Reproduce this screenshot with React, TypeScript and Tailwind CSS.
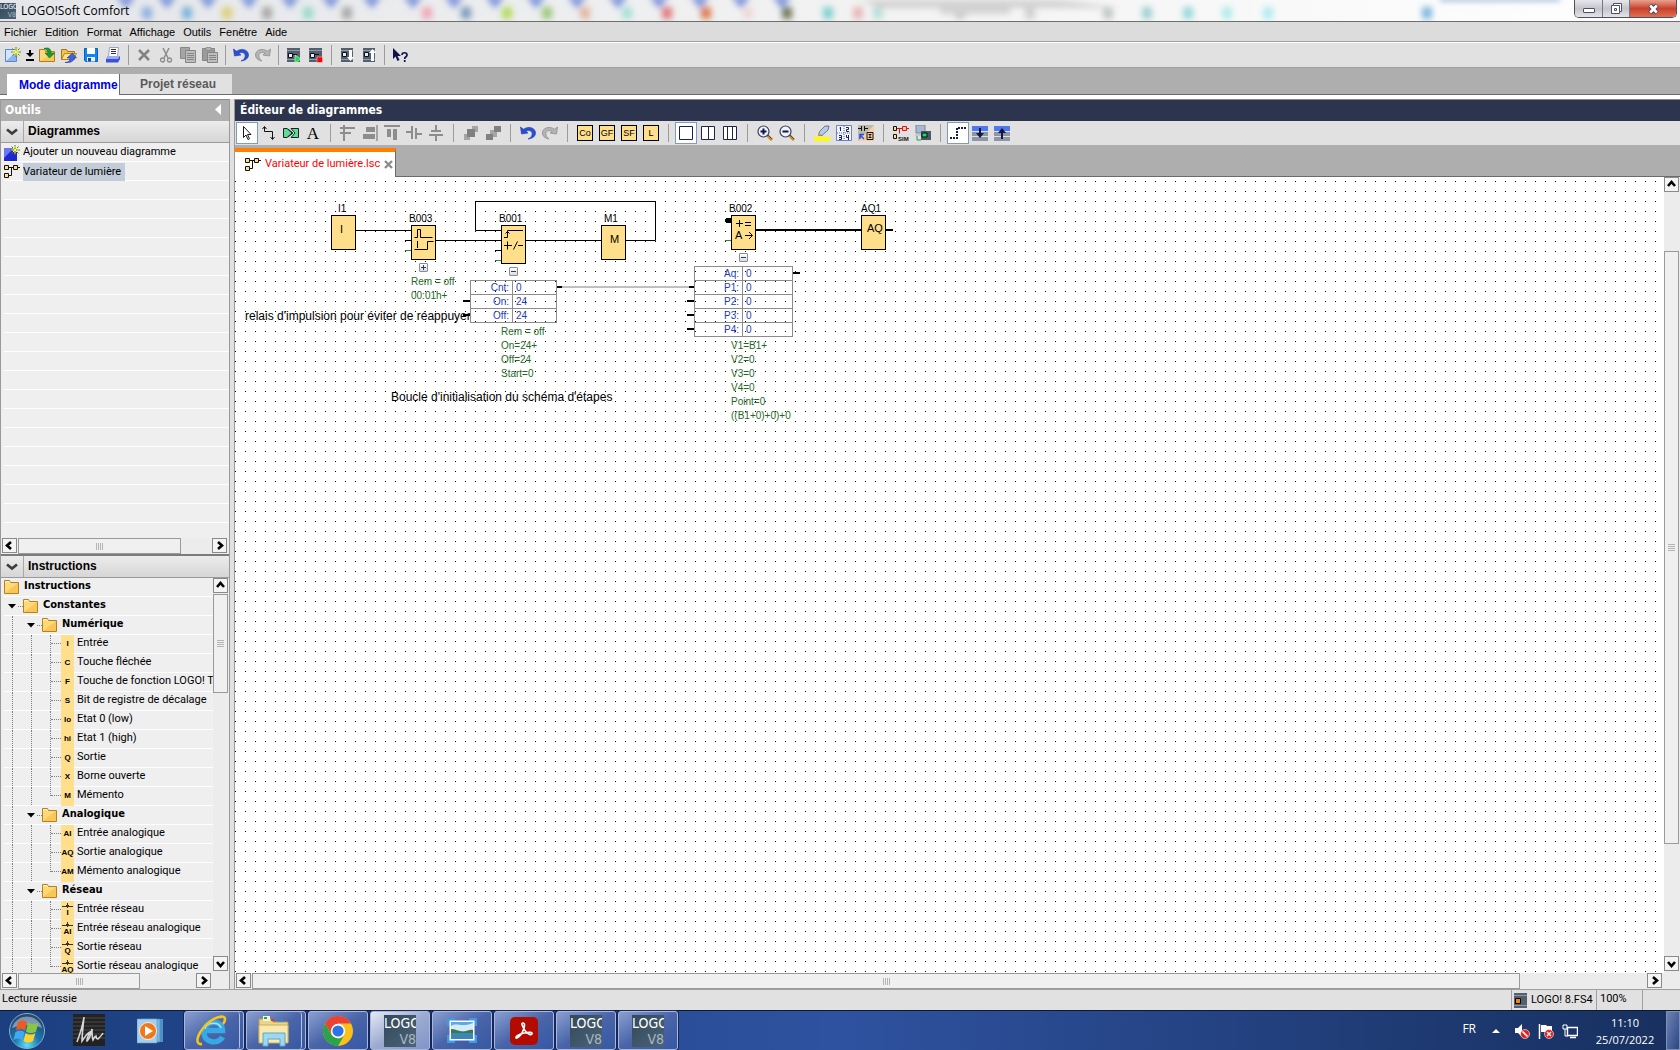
import type { ReactNode } from 'react'

type IconProps = { children: ReactNode; size?: number }

function Icon({ children, size = 16 }: IconProps) {
  return (
    <svg width={size} height={size} viewBox="0 0 16 16" fill="none" className="shrink-0" aria-hidden="true">
      {children}
    </svg>
  )
}

function Spark() {
  return (
    <>
      <path d="M11 0v10M6 5h10M7.500 1.500l7 7M14.500 1.500l-7 7" stroke="#5b7a2a" strokeWidth="1" />
      <path d="M11 1.500v7M7.500 5h7M9 3l4 4M13 3l-4 4" stroke="#ffff3c" strokeWidth="1" />
    </>
  )
}

const icons: Record<string, ReactNode> = {
  new: (
    <>
      <path d="M.5 2.500h11v12H.5z" fill="#d6e4fc" stroke="#5a86d0" />
      <path d="M1 14L11 5v9z" fill="#8fb4f2" />
      <Spark />
    </>
  ),
  open: (
    <>
      <path d="M.5 2.500h5l1 2h9v10H.5z" fill="#ffd878" stroke="#b0801c" />
      <path d="M1 14L15 6v8z" fill="#f7c95a" />
      <path d="M5 1.500c5-1.500 7 .5 7 4.500h3.500l-5 5-4.500-5H9c0-2-1-3.500-4-4.500z" fill="#1d9a2f" stroke="#0b6419" strokeWidth=".6" />
    </>
  ),
  import: (
    <>
      <path d="M.5 2.500h5l1 2h7v8H.5z" fill="#f5c24a" stroke="#a8761a" />
      <path d="M3.500 6.500h12l-3 6H.5z" fill="#ffdf85" stroke="#a8761a" strokeWidth=".8" />
      <path d="M4 15.500c4-.5 5-1.500 5-4.500H6l5.500-5 4 5H13c0 3-3 5-9 4.500z" fill="#3c62e8" stroke="#1b379c" strokeWidth=".6" />
    </>
  ),
  save: (
    <>
      <path d="M1.500 1.500h13v13h-12l-1-1z" fill="#1286f0" stroke="#0b5fc0" />
      <path d="M4 1h8v6H4z" fill="#fff" />
      <path d="M4 10h8v4.500H4z" fill="#e8f2ff" />
      <path d="M5 11h3v3.500H5z" fill="#0c4fa8" />
    </>
  ),
  print: (
    <>
      <path d="M4.500.5h9l-1 9h-9z" fill="#fff" stroke="#9aa2c8" />
      <path d="M6 2.500h5M6 4.500h5M6 6.500h5" stroke="#2a2a6a" />
      <path d="M3 9h12v3l-2 3.500H1V12z" fill="#3c50dc" />
      <path d="M3 9h12l-2 3H1z" fill="#9aa8f8" />
    </>
  ),
  delete: <path d="M3 3l10 10M13 3L3 13" stroke="#838383" strokeWidth="2.600" />,
  cut: (
    <>
      <path d="M5 1l5 10M11 1L6 11" stroke="#8c8c8c" strokeWidth="1.500" />
      <circle cx="4.500" cy="13" r="2" stroke="#8c8c8c" strokeWidth="1.300" />
      <circle cx="11.500" cy="13" r="2" stroke="#8c8c8c" strokeWidth="1.300" />
    </>
  ),
  copy: (
    <>
      <path d="M.5.5h9v11h-9z" fill="#a5a5a5" stroke="#888" />
      <path d="M5.500 3.500h10v12h-10z" fill="#bdbdbd" stroke="#858585" />
      <path d="M7 6.500h7M7 8.500h7M7 10.500h7M7 12.500h7" stroke="#858585" />
    </>
  ),
  paste: (
    <>
      <path d="M.5 1.500h12v12H.5z" fill="#9b9b9b" stroke="#868686" />
      <path d="M4 .5h5v3H4z" fill="#b4b4b4" stroke="#868686" strokeWidth=".8" />
      <path d="M5.500 5.500h10v10h-10z" fill="#bdbdbd" stroke="#858585" />
      <path d="M7 8.500h7M7 10.500h7M7 12.500h7" stroke="#858585" />
    </>
  ),
  undo: (
    <path d="M.5 2l1 7 6.500-1-2.200-1.700C9 4.500 13 6 12 10c-.5 2-2 3-4 4 5-.5 7.500-3 7.500-6C15.500 3 9 .5 3.500 4.200z" fill="#2a50cc" stroke="#1b3bb0" strokeWidth=".6" />
  ),
  redo: (
    <path d="M15.500 2l-1 7-6.500-1 2.200-1.700C7 4.500 3 6 4 10c.5 2 2 3 3 4-4-.5-6.500-3-6.500-6C.5 3 7 .5 12.500 4.200z" fill="#b4b4b4" stroke="#8e8e8e" strokeWidth=".8" />
  ),
  start: (
    <>
      <path d="M1 1h13v14H1z" fill="#55606f" />
      <path d="M1 3.500h13M1 12.500h13" stroke="#8e98a6" />
      <path d="M2.500 6.500h4v4h-4zM7 7.500h4" fill="#e8edf2" stroke="#0c1016" />
      <path d="M9 8l6 4-6 4z" fill="#1fe04a" stroke="#e8ffe8" strokeWidth=".6" />
    </>
  ),
  stop: (
    <>
      <path d="M1 1h13v14H1z" fill="#55606f" />
      <path d="M1 3.500h13M1 12.500h13" stroke="#8e98a6" />
      <path d="M2.500 6.500h4v4h-4zM7 7.500h4" fill="#e8edf2" stroke="#0c1016" />
      <path d="M9 10h5.500v5.500H9z" fill="#f00" stroke="#ffd6d6" strokeWidth=".5" />
    </>
  ),
  download: (
    <>
      <path d="M2 1h12v14H2z" fill="#55606f" />
      <path d="M2 3.500h12M2 12.500h12" stroke="#8e98a6" />
      <path d="M3.500 5.500h4v4h-4z" fill="#e8edf2" stroke="#0c1016" />
      <path d="M10 3h3v7h2l-3.500 4L8 10h2z" fill="#fff" />
    </>
  ),
  upload: (
    <>
      <path d="M2 1h12v14H2z" fill="#55606f" />
      <path d="M2 3.500h12M2 12.500h12" stroke="#8e98a6" />
      <path d="M3.500 5.500h4v4h-4z" fill="#e8edf2" stroke="#0c1016" />
      <path d="M10 14h3V6h2l-3.500-4L8 6h2z" fill="#fff" />
    </>
  ),
  help: (
    <>
      <path d="M1 1v11l2.500-2.500L5.500 14l2-1-2-4H9z" fill="#11124a" />
      <path d="M10 8c0-3 5-3 5 0 0 2-2.300 1.500-2.300 4M12.700 13v2" stroke="#11124a" strokeWidth="1.700" />
    </>
  ),
  select: <path d="M4.500 1.500v11l2.500-2.500L9 14.500l1.500-.7-2-4.300H12z" fill="#fff" stroke="#1a1a1a" />,
  wire: (
    <>
      <path d="M3.500 2v4.500h8V14" stroke="#111" />
      <path d="M1.500 4l2-2.500L5.500 4M9.500 12l2 2.500 2-2.500" stroke="#111" />
    </>
  ),
  blocks: (
    <>
      <path d="M.5 3.500H4L9 8l-5 4.500H.5z" fill="#5fdc8c" stroke="#123" />
      <path d="M8 3.500h7.500v9H8L12 8z" fill="#5fdc8c" stroke="#123" />
      <path d="M5 4l5 4-5 4" stroke="#123" />
    </>
  ),
  alignLeft: (
    <>
      <path d="M4 0v16" stroke="#8d8d8d" strokeWidth="2" />
      <path d="M0 3h15M0 8h11" stroke="#8d8d8d" strokeWidth="2" />
    </>
  ),
  alignRight: (
    <>
      <path d="M4 2h9v5H4zM1 9h12v5H1z" fill="#8d8d8d" />
      <path d="M15 0v16" stroke="#a5a5a5" strokeWidth="2" />
    </>
  ),
  alignTop: (
    <>
      <path d="M0 1h16" stroke="#8d8d8d" strokeWidth="2" />
      <path d="M3 4h4v8H3zM9 4h4v11H9z" fill="#8d8d8d" />
    </>
  ),
  centerV: <path d="M0 7h5M6 1v13M10 3v11M11 9h5" stroke="#8d8d8d" strokeWidth="2" />,
  centerH: <path d="M8 0v5M3 6h10M1 10h14M8 11v5" stroke="#8d8d8d" strokeWidth="2" />,
  front: (
    <>
      <path d="M9 1h6v6H9zM1 9h6v6H1z" fill="#a5a5a5" />
      <path d="M4 4h8v8H4z" fill="#808080" />
    </>
  ),
  back: (
    <>
      <path d="M5 5h7v7H5z" fill="#a5a5a5" />
      <path d="M9 1h7v6H9zM1 9h7v6H1z" fill="#808080" />
    </>
  ),
  win1: <path d="M1.500 1.500h13v13h-13z" fill="#fff" stroke="#1d2350" />,
  win2: <path d="M1.500 1.500h13v13h-13zM8.500 1v14" fill="#fff" stroke="#1d2350" />,
  win3: <path d="M1.500 1.500h13v13h-13zM5.500 1v14M10.500 1v14" fill="#fff" stroke="#1d2350" />,
  zoomIn: (
    <>
      <path d="M10 10l5 5" stroke="#d08a20" strokeWidth="3" />
      <path d="M11 10l4 4" stroke="#35507c" strokeWidth="1" />
      <circle cx="6.500" cy="6.500" r="5.500" fill="#eef4fb" stroke="#3a3f58" strokeWidth="1.200" />
      <path d="M6.500 3.500v6M3.500 6.500h6" stroke="#10154a" strokeWidth="2" />
    </>
  ),
  zoomOut: (
    <>
      <path d="M10 10l5 5" stroke="#d08a20" strokeWidth="3" />
      <path d="M11 10l4 4" stroke="#35507c" strokeWidth="1" />
      <circle cx="6.500" cy="6.500" r="5.500" fill="#eef4fb" stroke="#3a3f58" strokeWidth="1.200" />
      <path d="M3.500 6.500h6" stroke="#10154a" strokeWidth="2" />
    </>
  ),
  marker: (
    <>
      <path d="M0 12h16v4H0z" fill="#ff0" />
      <path d="M4.500 10.500l1-4L11 1h4l-1 4-6 5.500z" fill="#b9cbe4" stroke="#4a5f86" strokeWidth=".8" />
      <path d="M4 11l1-3 3 2z" fill="#e0a040" />
    </>
  ),
  grid: (
    <>
      <path d="M.5.5h15v15H.5z" fill="#f4f6ff" stroke="#6a7fd8" />
      <path d="M8 1v14M1 8h14" stroke="#4b60c8" strokeDasharray="1 1" />
      <path d="M4.500 2v4M3.500 3h1M10 2.500h2.500v2H10.500v2H13M3 10.500h2.500v4H3M3 12.500h2M10.500 10v2.500H13M12.500 10v5" stroke="#1d2350" />
    </>
  ),
  convert: (
    <>
      <path d="M0 0h16v16H0z" fill="#b9b9ae" />
      <path d="M16 0v16H0z" fill="#f7cfa4" />
      <path d="M0 3.500h3M3.500 1v5M6.500 1v5M7 3.500h3" stroke="#111" />
      <path d="M6 14l-4-4M1.500 9.500H6M2 9v5" stroke="#2a4ce8" strokeWidth="1.500" />
      <path d="M9 7.500h6v7H9zM10.500 9.500h3M12 9.500v3M10.500 12.500h3" stroke="#111" />
    </>
  ),
  sim: (
    <>
      <path d="M.5 1.500h3v4h-3zM.5 9.500h3v4h-3z" fill="#ffdf8c" stroke="#111" />
      <path d="M9.500 1.500h4v4h-4z" fill="#ffd0b0" stroke="#e01010" />
      <path d="M4 3.500h5M6.500 3.500v5M14 3.500h2" stroke="#e01010" />
      <text x="5" y="16" fontSize="6" fontWeight="700" fill="#111" fontFamily="Liberation Sans, sans-serif">SIM</text>
    </>
  ),
  online: (
    <>
      <path d="M1 0h9v8H1z" fill="#a8b8d8" stroke="#7b8698" />
      <path d="M0 9h9l-1 2H0z" fill="#c4cbd6" />
      <path d="M6 6h10v9H6z" fill="#4c5866" />
      <path d="M7 8h5v4H7z" fill="#19e05a" stroke="#0c1016" />
      <path d="M2 11v4h4" stroke="#0cae3a" />
    </>
  ),
  lines: (
    <>
      <path d="M0 13h7M8 3h8" stroke="#14184a" strokeWidth="2" strokeDasharray="2 1" />
      <path d="M7 3v11" stroke="#14184a" strokeWidth="2" strokeDasharray="2 1" />
    </>
  ),
  down: (
    <>
      <path d="M0 1h16v5H0z" fill="#4f78f0" />
      <path d="M0 7h16v4H0zM0 12h16v4H0z" fill="#8e96a6" />
      <path d="M8 3v9" stroke="#10154a" strokeWidth="2" />
      <path d="M4 8h8l-4 5z" fill="#10154a" />
    </>
  ),
  up: (
    <>
      <path d="M0 1h16v5H0z" fill="#4f78f0" />
      <path d="M0 7h16v4H0zM0 12h16v4H0z" fill="#8e96a6" />
      <path d="M8 5v9" stroke="#10154a" strokeWidth="2" />
      <path d="M4 8h8L8 3z" fill="#10154a" />
    </>
  ),
  diagram: (
    <>
      <path d="M5 3.500h11M7.500 4v7.500H5" stroke="#111" />
      <path d="M.5 1.500h4v4h-4zM.5 9.500h4v4h-4zM9.500 1.500h4v4h-4z" fill="#ffdf8c" stroke="#111" />
    </>
  ),
  addDiagram: (
    <>
      <path d="M0 3h13v13H0z" fill="#1e28d0" />
      <path d="M0 3h10L0 13z" fill="#6a76f4" />
      <Spark />
    </>
  ),
  folder: (
    <>
      <path d="M.5 1.500h5l1 2h8v11H.5z" fill="#ffd878" stroke="#b5811d" />
      <path d="M1 14L14 4v10z" fill="#f9c657" />
      <path d="M1.500 4V2.500h3.500l1 2" stroke="#fff3cc" />
    </>
  ),
}

function ToolButton({ name, label, active }: { name: string; label: string; active?: boolean }) {
  return (
    <button
      type="button"
      aria-label={label}
      className={`flex h-[22px] w-[22px] shrink-0 items-center justify-center ${active ? 'border border-[#7f9db9] bg-white' : ''}`}
    >
      <Icon>{icons[name]}</Icon>
    </button>
  )
}

function LetterButton({ text }: { text: string }) {
  return (
    <button type="button" className="flex h-[22px] w-[22px] shrink-0 items-center justify-center">
      <span className="flex h-4 w-4 items-center justify-center border border-black bg-[#ffdf8c] text-[9px] leading-none">{text}</span>
    </button>
  )
}

function Separator({ wide }: { wide?: boolean }) {
  return (
    <span className={`flex shrink-0 justify-center ${wide ? 'w-[13px]' : 'w-[9px]'}`}>
      <span className={`w-px bg-[#9c9c9c] ${wide ? 'h-[18px]' : 'h-5'}`} />
    </span>
  )
}

const arrowPaths = {
  left: 'M7 2L3 5.500 7 9',
  right: 'M4 2l4 3.500L4 9',
  up: 'M2 7l3.500-4L9 7',
  down: 'M2 4l3.500 4L9 4',
}

function ScrollButton({ dir, label }: { dir: keyof typeof arrowPaths; label: string }) {
  return (
    <button type="button" aria-label={label} className="flex h-[15px] w-[15px] shrink-0 items-center justify-center border border-[#8a8a8a] bg-[#f4f4f4]">
      <svg width="11" height="11" viewBox="0 0 11 11" fill="none">
        <path d={arrowPaths[dir]} stroke="#000" strokeWidth="2.600" />
      </svg>
    </button>
  )
}

function HScroll({ thumb, rest }: { thumb: string; rest: string }) {
  return (
    <div className="flex h-4 min-w-0 flex-1 shrink-0 gap-px bg-[#ececec] pl-px">
      <ScrollButton dir="left" label="Défiler à gauche" />
      <div className="flex min-w-0 flex-1">
        <div className={`flex h-4 items-center justify-center gap-px border border-[#9a9a9a] bg-[#f0f0f0] ${thumb}`}>
          {[0, 1, 2, 3].map((i) => (
            <span key={i} className="h-[7px] w-px bg-[#b4b4b4]" />
          ))}
        </div>
        <div className={rest} />
      </div>
      <ScrollButton dir="right" label="Défiler à droite" />
    </div>
  )
}

function VScroll({ before, thumb, rest }: { before: string; thumb: string; rest: string }) {
  return (
    <div className="flex w-4 shrink-0 flex-col gap-px bg-[#ececec] pb-0.5">
      <ScrollButton dir="up" label="Défiler vers le haut" />
      <div className="flex w-[15px] flex-1 flex-col">
        <div className={before} />
        <div className={`flex flex-col items-center justify-center gap-px border border-[#9a9a9a] bg-[#f0f0f0] ${thumb}`}>
          {[0, 1, 2, 3].map((i) => (
            <span key={i} className="h-px w-[7px] bg-[#b4b4b4]" />
          ))}
        </div>
        <div className={rest} />
      </div>
      <ScrollButton dir="down" label="Défiler vers le bas" />
    </div>
  )
}

// [x, color] of the blurred shapes behind the glass title bar
const glassSpots: [number, string][] = [
  [147, '#8fb0e0'], [187, '#7cb4dc'], [227, '#dcd07a'], [267, '#a8a8a8'], [308, '#9adbc8'], [347, '#a8a8a8'],
  [427, '#f0a8b8'], [466, '#7d9cbc'], [507, '#b4dc60'], [547, '#9cc880'], [585, '#e0b8a0'], [627, '#a8e0d8'],
  [667, '#e07880'], [706, '#dc7c50'], [748, '#f0d8d8'], [787, '#707858'], [828, '#80d0d0'], [858, '#e8b8b8'],
  [878, '#b8e0dc'], [960, '#c8c8c8'], [1030, '#d0d0d0'], [1108, '#c0c8c4'], [1147, '#a0d0d0'], [1188, '#98d8d8'],
  [1227, '#b0ecec'], [1268, '#b0ecf0'], [1427, '#80b8e0'],
]

function TitleBar() {
  return (
    <header className="relative flex h-[22px] shrink-0 items-center justify-between border-b border-[#6e6e6e] bg-linear-to-r from-[#e4e6ea] via-[#f2f2f2] to-white">
      <svg className="absolute inset-0 h-full w-full" aria-hidden="true">
        <defs>
          <filter id="soft" x="-50%" y="-50%" width="200%" height="200%">
            <feGaussianBlur stdDeviation="3" />
          </filter>
        </defs>
        <g filter="url(#soft)">
          {glassSpots.map(([x, color]) => (
            <rect key={x} x={x - 5} y="7" width="10" height="12" fill={color} />
          ))}
          {Array.from({ length: 17 }, (_, i) => (
            <path key={i} d={`M${116 + i * 41} -4h20l-10 13z`} fill="#7f97dc" />
          ))}
          <path d="M860 0h200l60 8h-240zM940 6h70v8h-70z" fill="#d2d2d2" />
          <path d="M1440 -4h120v5h-120z" fill="#9cb8d8" />
        </g>
      </svg>
      <div className="relative flex items-center gap-[5px]">
        <LogoTile className="h-4 w-4 text-[7px] leading-2" />
        <h1 className="font-['Open_Sans',sans-serif] text-[12px] leading-4 text-black">LOGO!Soft Comfort</h1>
      </div>
      <div className="relative mr-[3px] flex h-[18px] self-start overflow-hidden rounded-b-[5px] border border-t-0 border-[#4f4f5c]">
        <button type="button" aria-label="Réduire" className="flex w-7 items-center justify-center border-r border-[#77777f] bg-linear-to-b from-[#e8e8ec] via-[#c4c4cc] to-[#e4e4e8]">
          <span className="mt-1 h-[5px] w-3 rounded-[1px] border border-[#4c4f68] bg-white" />
        </button>
        <button type="button" aria-label="Restaurer" className="flex w-[27px] items-center justify-center border-r border-[#77777f] bg-linear-to-b from-[#e8e8ec] via-[#c4c4cc] to-[#e4e4e8]">
          <svg width="13" height="13" viewBox="0 0 13 13" fill="none">
            <path d="M3.500 1.500h8v8h-2v2h-8v-8h2z" fill="#fff" stroke="#4c4f68" />
            <path d="M3.500 3.500h6v6M4.500 6.500h2v2h-2z" stroke="#4c4f68" />
          </svg>
        </button>
        <button type="button" aria-label="Fermer" className="flex w-[46px] items-center justify-center bg-linear-to-b from-[#e8a090] via-[#c8402c] to-[#e07050]">
          <svg width="13" height="12" viewBox="0 0 13 12" fill="none">
            <path d="M3 2l7 8M10 2l-7 8" stroke="#4c4058" strokeWidth="4.500" />
            <path d="M3.200 2.500l6.600 7M9.800 2.500l-6.600 7" stroke="#fff" strokeWidth="2.600" />
          </svg>
        </button>
      </div>
    </header>
  )
}

function LogoTile({ className }: { className: string }) {
  return (
    <span className={`flex shrink-0 flex-col overflow-hidden bg-linear-to-br from-[#33485a] to-[#4c6478] font-['DejaVu_Sans_Condensed',sans-serif] text-white ${className}`}>
      <span>LOGO</span>
      <span className="self-end text-[#a9b8c2]">V8</span>
    </span>
  )
}

const menus = ['Fichier', 'Edition', 'Format', 'Affichage', 'Outils', 'Fenêtre', 'Aide']

function MenuBar() {
  return (
    <nav className="flex h-[21px] shrink-0 items-center gap-2 border-b border-white bg-[#dcdcdc] pl-1 text-[11px] leading-4 shadow-[inset_0_-1px_0_#a0a0a0]">
      {menus.map((menu) => (
        <button key={menu} type="button">
          {menu}
        </button>
      ))}
    </nav>
  )
}

function MainToolbar() {
  return (
    <div role="toolbar" aria-label="Barre d'outils standard" className="flex h-[25px] shrink-0 items-center border-b border-[#a0a0a0] bg-[#e1e1e1] pl-0.5">
      <ToolButton name="new" label="Nouveau" />
      <button type="button" aria-label="Choisir le type" className="flex w-3 justify-start pl-0.5">
        <svg width="8" height="11" viewBox="0 0 8 11">
          <path d="M3 0h2v3h3L4 7 0 3h3zM0 9h8v2H0z" fill="#000" />
        </svg>
      </button>
      <ToolButton name="open" label="Ouvrir" />
      <ToolButton name="import" label="Fermer le fichier" />
      <ToolButton name="save" label="Enregistrer" />
      <ToolButton name="print" label="Imprimer" />
      <Separator />
      <ToolButton name="delete" label="Supprimer" />
      <ToolButton name="cut" label="Couper" />
      <ToolButton name="copy" label="Copier" />
      <ToolButton name="paste" label="Coller" />
      <Separator />
      <ToolButton name="undo" label="Annuler" />
      <ToolButton name="redo" label="Rétablir" />
      <Separator />
      <ToolButton name="start" label="Démarrer LOGO!" />
      <ToolButton name="stop" label="Arrêter LOGO!" />
      <Separator />
      <ToolButton name="download" label="PC vers LOGO!" />
      <ToolButton name="upload" label="LOGO! vers PC" />
      <Separator />
      <ToolButton name="help" label="Aide contextuelle" />
    </div>
  )
}

function ModeTabs() {
  return (
    <div role="tablist" className="flex h-[27px] shrink-0 items-end border-b border-[#6b6b6b] bg-[#aeaeae] pl-[7px] text-[12px] font-bold">
      <button type="button" role="tab" aria-selected="true" className="-mb-px h-[21px] w-[113px] border-r border-[#6b6b6b] bg-white pl-3 text-left whitespace-nowrap text-[#0000e6]">
        Mode diagramme
      </button>
      <button type="button" role="tab" aria-selected="false" className="h-5 w-28 bg-[#e1e1e1] pl-5 text-left text-[#5a5a5a]">
        Projet réseau
      </button>
    </div>
  )
}

function SectionHeader({ title }: { title: string }) {
  return (
    <div className="flex h-[22px] shrink-0 items-center border-b border-[#9a9a9a] bg-linear-to-b from-[#ececec] to-[#d6d6d6]">
      <button type="button" aria-label={`Replier ${title}`} className="flex h-full w-[23px] items-center justify-center border-r border-[#a8a8a8]">
        <svg width="12" height="8" viewBox="0 0 12 8" fill="none">
          <path d="M1 1.500l5 4 5-4" stroke="#3c3c3c" strokeWidth="2.600" />
        </svg>
      </button>
      <h2 className="pb-0.5 pl-1 text-[12px] leading-4 font-bold">{title}</h2>
    </div>
  )
}

function DiagramList() {
  return (
    <section className="flex min-h-0 flex-1 flex-col border-b-2 border-[#7c7c7c]">
      <SectionHeader title="Diagrammes" />
      <div className="ml-[3px] min-h-0 flex-1 bg-[linear-gradient(#efefef_18px,#ffffff_18px)] bg-[length:100%_19px] font-['Roboto',sans-serif] text-[11px]">
        <button type="button" className="flex h-[19px] items-center gap-[3px]">
          <Icon>{icons.addDiagram}</Icon>
          Ajouter un nouveau diagramme
        </button>
        <button type="button" className="flex h-[19px] items-center gap-[3px]">
          <Icon>{icons.diagram}</Icon>
          <span className="bg-[#c3cdd9] pr-1 leading-[18px]">Variateur de lumière</span>
        </button>
      </div>
      <div className="flex shrink-0 bg-[#ececec] pr-0.5">
        <HScroll thumb="flex-[165]" rest="flex-[31]" />
      </div>
    </section>
  )
}

type Leaf = { tag: string; label: string; net?: boolean }
type Group = { name: string; items: Leaf[] }

const groups: Group[] = [
  {
    name: 'Numérique',
    items: [
      { tag: 'I', label: 'Entrée' },
      { tag: 'C', label: 'Touche fléchée' },
      { tag: 'F', label: 'Touche de fonction LOGO! TDE' },
      { tag: 'S', label: 'Bit de registre de décalage' },
      { tag: 'lo', label: 'Etat 0 (low)' },
      { tag: 'hi', label: 'Etat 1 (high)' },
      { tag: 'Q', label: 'Sortie' },
      { tag: 'X', label: 'Borne ouverte' },
      { tag: 'M', label: 'Mémento' },
    ],
  },
  {
    name: 'Analogique',
    items: [
      { tag: 'AI', label: 'Entrée analogique' },
      { tag: 'AQ', label: 'Sortie analogique' },
      { tag: 'AM', label: 'Mémento analogique' },
    ],
  },
  {
    name: 'Réseau',
    items: [
      { tag: 'I', label: 'Entrée réseau', net: true },
      { tag: 'AI', label: 'Entrée réseau analogique', net: true },
      { tag: 'Q', label: 'Sortie réseau', net: true },
      { tag: 'AQ', label: 'Sortie réseau analogique', net: true },
    ],
  },
]

function Expander() {
  return (
    <svg width="8" height="5" viewBox="0 0 8 5" className="shrink-0" aria-hidden="true">
      <path d="M0 0h8L4 4.500z" fill="#000" />
    </svg>
  )
}

function Guide() {
  return <span className="ml-2 h-full w-[11px] shrink-0 border-l border-dotted border-[#808080]" />
}

function FolderRow({ name, level }: { name: string; level: number }) {
  return (
    <div className="flex h-[19px] shrink-0 items-center border-b border-white font-['DejaVu_Sans_Condensed',sans-serif] text-[11px] font-bold">
      {level === 2 && <Guide />}
      {level > 0 && (
        <button type="button" aria-label={`Replier ${name}`} className="flex w-[19px] shrink-0 items-center gap-0.5 pl-1">
          <Expander />
          <span className="w-[5px] border-t border-dotted border-[#808080]" />
        </button>
      )}
      <Icon>{icons.folder}</Icon>
      <span className="pb-px pl-1">{name}</span>
    </div>
  )
}

function LeafRow({ item, last }: { item: Leaf; last: boolean }) {
  return (
    <div className="flex h-[19px] shrink-0 items-center border-b border-white whitespace-nowrap">
      <Guide />
      <Guide />
      <span className={`ml-2 w-[11px] shrink-0 self-start border-l border-dotted border-[#808080] ${last ? 'h-[9px]' : 'h-[18px]'}`}>
        <span className="block h-[9px] border-b border-dotted border-[#808080]" />
      </span>
      <span className="-mb-px flex h-[19px] w-[13px] shrink-0 flex-col items-center justify-center bg-[#ffdf8c] pb-0.5 font-['Liberation_Sans',sans-serif] text-[8px] leading-[9px] font-bold">
        {item.net && (
          <svg width="11" height="5" viewBox="0 0 11 5" className="shrink-0" aria-hidden="true">
            <path d="M0 3.500h11M5.500 0v5M4 2l1.500 1.500L7 2" stroke="#333" fill="none" />
          </svg>
        )}
        {item.tag}
      </span>
      <span className="pb-px pl-[3px]">{item.label}</span>
    </div>
  )
}

function InstructionTree() {
  return (
    <section className="flex min-h-0 flex-1 flex-col">
      <SectionHeader title="Instructions" />
      <div className="flex min-h-0 flex-1">
        <div className="ml-[3px] flex min-w-0 flex-1 flex-col overflow-hidden bg-[#efefef] font-['Roboto',sans-serif] text-[11px]">
          <FolderRow name="Instructions" level={0} />
          <FolderRow name="Constantes" level={1} />
          {groups.map((group) => (
            <div key={group.name} className="shrink-0">
              <FolderRow name={group.name} level={2} />
              {group.items.map((item, i) => (
                <LeafRow key={item.label} item={item} last={i === group.items.length - 1} />
              ))}
            </div>
          ))}
        </div>
        <VScroll before="" thumb="flex-[98]" rest="flex-[265]" />
      </div>
      <div className="flex shrink-0 bg-[#ececec] pr-[18px]">
        <HScroll thumb="flex-[123]" rest="flex-[56]" />
      </div>
    </section>
  )
}

function ToolsPanel() {
  return (
    <aside className="flex w-[230px] shrink-0 flex-col border-x border-[#9a9a9a] bg-[#efefef]">
      <div className="flex h-[22px] shrink-0 items-center justify-between border-t border-[#8a8a8a] bg-[#aeaeae] pr-2 pb-0.5 pl-1 font-['DejaVu_Sans_Condensed',sans-serif] text-[12px] font-bold text-white">
        <h2>Outils</h2>
        <button type="button" aria-label="Masquer les outils">
          <svg width="6" height="11" viewBox="0 0 6 11">
            <path d="M6 0v11L0 5.500z" fill="#fff" />
          </svg>
        </button>
      </div>
      <DiagramList />
      <InstructionTree />
    </aside>
  )
}

function EditorToolbar() {
  return (
    <div role="toolbar" aria-label="Outils de diagramme" className="flex h-6 shrink-0 items-center bg-[#e1e1e1] pl-px">
      <ToolButton name="select" label="Sélection" active />
      <ToolButton name="wire" label="Connecteur" />
      <ToolButton name="blocks" label="Blocs" />
      <button type="button" aria-label="Texte" className="w-[22px] font-['Liberation_Serif',serif] text-[17px] leading-none">A</button>
      <Separator wide />
      <ToolButton name="alignLeft" label="Aligner à gauche" />
      <ToolButton name="alignRight" label="Aligner à droite" />
      <ToolButton name="alignTop" label="Aligner en haut" />
      <ToolButton name="centerV" label="Centrer verticalement" />
      <ToolButton name="centerH" label="Centrer horizontalement" />
      <Separator wide />
      <ToolButton name="front" label="Premier plan" />
      <ToolButton name="back" label="Arrière-plan" />
      <Separator wide />
      <ToolButton name="undo" label="Annuler" />
      <ToolButton name="redo" label="Rétablir" />
      <Separator wide />
      <LetterButton text="Co" />
      <LetterButton text="GF" />
      <LetterButton text="SF" />
      <LetterButton text="L" />
      <Separator wide />
      <ToolButton name="win1" label="Une fenêtre" active />
      <ToolButton name="win2" label="Deux fenêtres" />
      <ToolButton name="win3" label="Trois fenêtres" />
      <Separator wide />
      <ToolButton name="zoomIn" label="Agrandir" />
      <ToolButton name="zoomOut" label="Réduire" />
      <Separator wide />
      <ToolButton name="marker" label="Surligner" />
      <ToolButton name="grid" label="Mise en page" />
      <ToolButton name="convert" label="Convertir" />
      <Separator wide />
      <ToolButton name="sim" label="Simulation" />
      <ToolButton name="online" label="Test en ligne" />
      <Separator wide />
      <ToolButton name="lines" label="Lignes" active />
      <ToolButton name="down" label="Développer les paramètres" />
      <ToolButton name="up" label="Réduire les paramètres" />
    </div>
  )
}

type BlockProps = { x: number; y: number; h?: number; name: string; nameX: number; children: ReactNode }

function Block({ x, y, h = 34, name, nameX, children }: BlockProps) {
  return (
    <g>
      <rect x={x + 0.5} y={y + 0.5} width="24" height={h} fill="#ffdf8c" stroke="#000" />
      <text x={nameX} y={y - 3} fontSize="10">{name}</text>
      {children}
    </g>
  )
}

function Notes({ x, y, lines }: { x: number; y: number; lines: string[] }) {
  return (
    <g fontSize="10" fill="#1e691e">
      {lines.map((line, i) => (
        <text key={line} x={x} y={y + i * 14}>{line}</text>
      ))}
    </g>
  )
}

function Wiring() {
  return (
    <svg className="absolute inset-0 h-full w-full font-['Liberation_Sans',sans-serif]">
      <defs>
        <pattern id="dots" width="10" height="10" patternUnits="userSpaceOnUse">
          <rect x="0" y="4" width="1" height="1" fill="#000" />
        </pattern>
      </defs>
      <rect width="100%" height="100%" fill="url(#dots)" />

      <g stroke="#000" fill="none">
        <path d="M121 53.500h56M201 63.500h66M291 63.500h76M391 63.500h29.500v-39h-180v29h26M170 63.500h7M260 73.500h7" />
        <path d="M170 73.500h7M260 83.500h7M490 63.500h7" stroke="#2f8a2f" />
        <path d="M521 53h106M651 53h7" strokeWidth="2" />
        <path d="M327 110h127" stroke="#c0c0c0" strokeWidth="2" />
        <path d="M321 110h6M228 124h7M228 138h7M557 96h8M454 110h5M452 124h7M452 138h7M452 152h7" strokeWidth="2" />
      </g>
      <path d="M490 42h1v-1h6v5h-6v-1h-1z" fill="#000" />

      <Block x={96} y={38} name="I1" nameX={103}>
        <text x="105" y="56" fontSize="11">I</text>
      </Block>
      <Block x={176} y={48} name="B003" nameX={174}>
        <path d="M179.500 60.500h3v-8h3v8h12M182.500 64v7M179.500 72.500h13v-8h6" stroke="#000" fill="none" />
      </Block>
      <Block x={266} y={48} h={38} name="B001" nameX={264}>
        <path d="M269 60.500h3.500v-7H288M270.500 56.500l2-2 2 2M269 68.500h8M272.500 64.500v8M278.500 72.500l4-8M283 68.500h5" stroke="#000" fill="none" />
      </Block>
      <Block x={366} y={48} name="M1" nameX={369}>
        <text x="375" y="66" fontSize="11">M</text>
      </Block>
      <Block x={496} y={38} name="B002" nameX={494}>
        <path d="M501 46.500h7M504.500 43v7M510 45.500h6M510 48.500h6M510 58.500h7M514 55l3.500 3.500L514 62" stroke="#000" fill="none" />
        <text x="500" y="62" fontSize="11">A</text>
      </Block>
      <Block x={626} y={38} name="AQ1" nameX={626}>
        <text x="632" y="55" fontSize="11">AQ</text>
      </Block>

      <Notes x={176} y={108} lines={['Rem = off', '00:01h+']} />
      <Notes x={266} y={158} lines={['Rem = off', 'On=24+', 'Off=24', 'Start=0']} />
      <Notes x={496} y={172} lines={['V1=B1+', 'V2=0', 'V3=0', 'V4=0', 'Point=0', '((B1+0)+0)+0']} />

      <text x="10" y="143" fontSize="12">relais d'impulsion pour éviter de réappuyer</text>
      <text x="156" y="224" fontSize="12">Boucle d'initialisation du schéma d'étapes</text>
    </svg>
  )
}

type ParamTableProps = { rows: [string, string][]; className: string; labelClass: string }

function ParamTable({ rows, className, labelClass }: ParamTableProps) {
  return (
    <table className={`absolute border-collapse text-[10px] leading-[13px] text-[#1e3cb4] ${className}`}>
      <tbody>
        {rows.map(([label, value]) => (
          <tr key={label} className="h-[14px]">
            <th scope="row" className={`border border-[#8c8c8c] p-0 pr-[3px] text-right font-normal ${labelClass}`}>{label}:</th>
            <td className="border border-[#8c8c8c] p-0 pl-[3px]">{value}</td>
          </tr>
        ))}
      </tbody>
    </table>
  )
}

function FoldButton({ open, className }: { open: boolean; className: string }) {
  return (
    <button
      type="button"
      aria-label={open ? 'Masquer les paramètres' : 'Afficher les paramètres'}
      className={`absolute h-[9px] w-[9px] rounded-[1px] border border-[#8c8c8c] bg-linear-to-b from-white to-[#dcdcdc] ${className}`}
    >
      <svg width="7" height="7" viewBox="0 0 7 7" className="block">
        <path d={open ? 'M1 3.500h5' : 'M1 3.500h5M3.500 1v5'} stroke="#1e3c96" />
      </svg>
    </button>
  )
}

function Canvas() {
  return (
    <div className="relative min-w-0 flex-1 overflow-hidden bg-white">
      <Wiring />
      <FoldButton open={false} className="top-[86px] left-[184px]" />
      <FoldButton open className="top-[90px] left-[274px]" />
      <FoldButton open className="top-[76px] left-[504px]" />
      <ParamTable
        className="top-[103px] left-[235px] w-[87px]"
        labelClass="w-[42px]"
        rows={[['Cnt', '0'], ['On', '24'], ['Off', '24']]}
      />
      <ParamTable
        className="top-[89px] left-[459px] w-[99px]"
        labelClass="w-12"
        rows={[['Aq', '0'], ['P1', '0'], ['P2', '0'], ['P3', '0'], ['P4', '0']]}
      />
    </div>
  )
}

function Editor() {
  return (
    <main className="flex min-w-0 flex-1 flex-col border-l border-[#9a9a9a]">
      <h2 className="flex h-[22px] shrink-0 items-center border-t border-[#8a8a8a] bg-[#2d344d] pb-0.5 pl-[5px] font-['DejaVu_Sans_Condensed',sans-serif] text-[12px] font-bold text-white">
        Éditeur de diagrammes
      </h2>
      <EditorToolbar />
      <div role="tablist" className="flex h-8 shrink-0 items-end border-b border-[#6b6b6b] bg-[#aeaeae]">
        <div className="-mb-px flex h-[29px] w-[161px] items-center border-t-4 border-r border-t-[#ff8000] border-r-[#6b6b6b] bg-white pl-2.5 font-['Roboto',sans-serif] text-[11px]">
          <button type="button" role="tab" aria-selected="true" className="flex items-center gap-1 whitespace-nowrap text-[#f00]">
            <Icon>{icons.diagram}</Icon>
            Variateur de lumière.lsc
          </button>
          <button type="button" aria-label="Fermer l'onglet" className="ml-1 shrink-0">
            <svg width="9" height="9" viewBox="0 0 9 9">
              <path d="M1 1l7 7M8 1L1 8" stroke="#8c8c8c" strokeWidth="2.400" />
            </svg>
          </button>
        </div>
      </div>
      <div className="flex min-h-0 flex-1">
        <Canvas />
        <VScroll before="flex-[58]" thumb="flex-[594]" rest="flex-[112]" />
      </div>
      <div className="flex shrink-0 bg-[#ececec] pr-[18px]">
        <HScroll thumb="flex-[1270]" rest="flex-[126]" />
      </div>
    </main>
  )
}

function StatusBar() {
  return (
    <footer className="flex h-[21px] shrink-0 items-stretch border-t border-[#a0a0a0] bg-[#e1e1e1] font-['Roboto',sans-serif] text-[11px] leading-[18px]">
      <span className="flex-1 pl-0.5">Lecture réussie</span>
      <span className="flex w-[85px] items-center gap-1 border-l border-[#a0a0a0] pl-0.5 whitespace-nowrap">
        <svg width="13" height="15" viewBox="0 0 13 15" className="shrink-0" aria-hidden="true">
          <path d="M0 0h13v15H0z" fill="#55606f" />
          <path d="M0 2.500h13M0 12.500h13" stroke="#8c96a6" />
          <path d="M1.500 5.500h5v5h-5z" fill="#ff8000" stroke="#000" />
        </svg>
        LOGO! 8.FS4
      </span>
      <span className="w-[46px] border-l border-[#a0a0a0] pl-[3px]">100%</span>
      <span className="w-[38px] border-l border-[#a0a0a0]" />
    </footer>
  )
}

function StartOrb() {
  return (
    <svg width="38" height="38" viewBox="0 0 38 38" aria-hidden="true">
      <defs>
        <radialGradient id="orb" cx=".5" cy=".9" r=".8">
          <stop offset="0" stopColor="#5fe0f8" />
          <stop offset=".45" stopColor="#1a78b0" />
          <stop offset="1" stopColor="#27486e" />
        </radialGradient>
      </defs>
      <circle cx="19" cy="19" r="17.500" fill="url(#orb)" stroke="#7fb0d0" />
      <path d="M4 16a15.500 15.500 0 0130 0c-9-4-20-4-30 0z" fill="#fff" opacity=".4" />
      <path d="M10 10c3-2 6-2 9 0l-2 8.500c-3-2-6-2-9 0z" fill="#ee5a24" />
      <path d="M20 10.500c3 2 7 2 10.500 0l-2.500 9c-3 2-7 2-10 0z" fill="#8cc63e" />
      <path d="M7.500 20c3-2 6-2 9 0l-2 8c-3-2-6-2-9 0z" fill="#3fa9f5" />
      <path d="M17.500 21c3 2 7 2 10 0l-2.500 8c-3 2-6.500 2-9.500 0z" fill="#ffd02e" />
    </svg>
  )
}

function Ie() {
  return (
    <svg width="32" height="32" viewBox="0 0 32 32" fill="none" aria-hidden="true">
      <path d="M9 15.500h17.500C26.500 4.500 8 4.500 8 17.500c0 11 15 12 18.500 4.500" stroke="#35aae6" strokeWidth="5.500" />
      <path d="M9 14c1-7 14-8 16-1" stroke="#a5e4fb" strokeWidth="1.500" />
      <path d="M6 29C-1 30 0 21 9 11 17 2 29-1 29 4c0 2-1 4-2 5" stroke="#f5c518" strokeWidth="2.600" />
    </svg>
  )
}

function Explorer() {
  return (
    <svg width="34" height="32" viewBox="0 0 34 32" aria-hidden="true">
      <path d="M2 4h12l2 3h15v20H2z" fill="#ecd58a" stroke="#b89a4a" />
      <path d="M6 1h7v5H6z" fill="#f7f3dc" />
      <path d="M7 2h3v2H7z" fill="#1cae3a" />
      <path d="M14 4h3v2h-3z" fill="#d04030" />
      <path d="M22 5h4v2h-4z" fill="#2a8ae0" />
      <path d="M2 10h29v18H2z" fill="#f8e9ae" stroke="#c8ad62" />
      <path d="M6 31V18h22v13h-5v-7H11v7z" fill="#9fd8ee" stroke="#5aa8cc" />
    </svg>
  )
}

function Chrome() {
  return (
    <svg width="30" height="30" viewBox="0 0 30 30" aria-hidden="true">
      <circle cx="15" cy="15" r="15" fill="#fbc116" />
      <path d="M2 7.500A15 15 0 0128 7.500H15L8.500 18.500z" fill="#ea4335" />
      <path d="M2 7.500l6.500 11.200A7.500 7.500 0 0015 22.500L11.500 29.600A15 15 0 012 7.500z" fill="#2ba24c" />
      <path d="M8.500 18.700a7.500 7.500 0 0013 0L15 30a15 15 0 01-4-.5z" fill="#2ba24c" />
      <circle cx="15" cy="15" r="7.200" fill="#fff" />
      <circle cx="15" cy="15" r="5.600" fill="#2a74e8" />
    </svg>
  )
}

function Picture() {
  return (
    <svg width="30" height="25" viewBox="0 0 30 25" aria-hidden="true">
      <path d="M0 0h8v3H3v5H0zM30 0h-8v3h5v5h3zM0 25h8v-3H3v-5H0zM30 25h-8v-3h5v-5h3z" fill="#3f9ae0" />
      <path d="M2.500 2.500h25v20h-25z" fill="#fff" />
      <path d="M4 4h22v17H4z" fill="#5fa8e4" />
      <path d="M4 8c6-4 10 2 22-3v8H4z" fill="#d4ebfa" />
      <path d="M4 11c4 0 8 2 12 3 4-1 7-3 10-2v4H4z" fill="#3a7a4a" />
      <path d="M4 15h22v6H4z" fill="#3f86b8" />
    </svg>
  )
}

function Acrobat() {
  return (
    <svg width="28" height="28" viewBox="0 0 28 28" fill="none" aria-hidden="true">
      <rect width="28" height="28" rx="5" fill="#b30b00" />
      <path d="M13 6c3 0 1 6-1 10-2 3-5 6-6 5s3-4 8-5 9-1 8 1-6-1-8-5-3-6-1-6z" stroke="#fff" strokeWidth="1.600" />
    </svg>
  )
}

type TaskItem = { label: string; icon: ReactNode; stacked?: boolean; active?: boolean }

const logoIcon = <LogoTile className="h-8 w-8 text-[14px] leading-4" />

const tasks: TaskItem[] = [
  { label: 'Internet Explorer', icon: <Ie />, stacked: true },
  { label: 'Explorateur Windows', icon: <Explorer />, stacked: true },
  { label: 'Google Chrome', icon: <Chrome /> },
  { label: 'LOGO!Soft Comfort', icon: logoIcon, active: true },
  { label: 'Visionneuse de photos', icon: <Picture /> },
  { label: 'Adobe Acrobat', icon: <Acrobat /> },
  { label: 'LOGO!Soft Comfort 2', icon: logoIcon },
  { label: 'LOGO!Soft Comfort 3', icon: logoIcon },
]

function TaskButton({ item }: { item: TaskItem }) {
  return (
    <button
      type="button"
      aria-label={item.label}
      className={`flex h-[39px] w-[60px] rounded-[3px] border border-[#a8b8dc] shadow-[0_0_0_1px_#16265a] ${
        item.stacked ? 'pr-[3px]' : ''
      } ${
        item.active
          ? 'bg-linear-to-br from-[#e4e9f4] via-[#9cabd0] to-[#7f94c8]'
          : 'bg-linear-to-br from-[#8a9fd0] via-[#4a64a8] to-[#3558a4]'
      }`}
    >
      <span className={`flex h-full flex-1 items-center justify-center ${item.stacked ? 'rounded-[3px] border-r border-[#b4c2e0]' : ''}`}>
        {item.icon}
      </span>
    </button>
  )
}

function Taskbar() {
  return (
    <div className="flex h-10 shrink-0 items-start border-t border-[#10182c] bg-linear-to-r from-[#1c3f80] via-[#2f52a0] to-[#17305f] text-white">
      <button type="button" aria-label="Démarrer" className="ml-2 flex w-[38px] pt-px">
        <StartOrb />
      </button>
      <button type="button" aria-label="Analyseur" className="mt-[3px] ml-[27px]">
        <svg width="32" height="32" viewBox="0 0 32 32" fill="none">
          <path d="M0 0h32v32H0z" fill="#222" />
          <path d="M0 4h32M0 8h32M0 12h32M0 16h32M0 20h32M0 24h32" stroke="#4a4a4a" />
          <path d="M4 28c3-8 6-18 7-25-1 9-2 18-2 24 3-4 5-8 8-9-2 4-4 8-3 9 3-3 4-7 5-12 0 5 0 8 1 11 1-2 2-4 3-4 0 2 1 3 2 3 2-2 4-4 5-6" stroke="#d8d8d8" strokeWidth="1.600" />
        </svg>
      </button>
      <button type="button" aria-label="Lecteur multimédia" className="mt-[7px] ml-8">
        <svg width="26" height="26" viewBox="0 0 26 26">
          <path d="M8 1h18v23H8z" fill="#4f94c8" />
          <path d="M4 1h19v23H4z" fill="#7db8e0" stroke="#4a88b8" strokeWidth=".6" />
          <path d="M0 1h20v24H0z" fill="#a5d0ec" stroke="#5a98c4" strokeWidth=".6" />
          <circle cx="11" cy="13" r="8.500" fill="#f07818" stroke="#fff" strokeWidth=".8" />
          <path d="M8 8l8 5-8 5z" fill="#fff" />
        </svg>
      </button>
      <div className="ml-[21px] flex gap-0.5">
        {tasks.map((item) => (
          <TaskButton key={item.label} item={item} />
        ))}
      </div>
      <div className="ml-auto flex h-full items-center font-['Open_Sans',sans-serif] text-[12px]">
        <span className="mb-1">FR</span>
        <button type="button" aria-label="Afficher les icônes cachées" className="ml-4">
          <svg width="8" height="4" viewBox="0 0 8 4">
            <path d="M0 4l4-4 4 4z" fill="#fff" />
          </svg>
        </button>
        <svg width="16" height="16" viewBox="0 0 16 16" fill="none" className="ml-3.5" aria-label="Volume coupé">
          <path d="M1 5h3l4-4v13l-4-4H1z" fill="#fff" />
          <circle cx="11" cy="11" r="4.500" fill="#e02020" stroke="#fff" strokeWidth=".6" />
          <path d="M8.500 8.500l5 5" stroke="#fff" strokeWidth="1.600" />
        </svg>
        <svg width="16" height="16" viewBox="0 0 16 16" fill="none" className="ml-2" aria-label="Centre de maintenance">
          <path d="M1.500 1v15" stroke="#fff" strokeWidth="1.500" />
          <path d="M3 2h5l1 1h5v7H8L7 9H3z" fill="#fff" />
          <circle cx="11" cy="11" r="4.500" fill="#e02020" stroke="#fff" strokeWidth=".6" />
          <path d="M9 9l4 4M13 9l-4 4" stroke="#fff" strokeWidth="1.300" />
        </svg>
        <svg width="16" height="16" viewBox="0 0 16 16" fill="none" className="ml-2" aria-label="Réseau">
          <path d="M5.500 4.500h10v8h-10zM8 14.500h6" stroke="#fff" strokeWidth="1.400" />
          <path d="M1 2h4v4H1zM3 6v7h3" stroke="#fff" />
        </svg>
        <div className="mr-1.5 ml-3 flex w-[70px] flex-col items-center text-[11px] leading-[17px]">
          <time>11:10</time>
          <time>25/07/2022</time>
        </div>
        <button type="button" aria-label="Afficher le bureau" className="h-full w-[14px] border border-[#7f90b4] bg-linear-to-br from-[#6f84b4] to-[#2b4684]" />
      </div>
    </div>
  )
}

export default function App() {
  return (
    <div className="flex h-screen flex-col overflow-hidden bg-[#e1e1e1] font-['Liberation_Sans',Arial,sans-serif] text-black">
      <TitleBar />
      <MenuBar />
      <MainToolbar />
      <ModeTabs />
      <div className="flex min-h-0 flex-1 gap-1 border-t-4 border-white">
        <ToolsPanel />
        <Editor />
      </div>
      <StatusBar />
      <Taskbar />
    </div>
  )
}
